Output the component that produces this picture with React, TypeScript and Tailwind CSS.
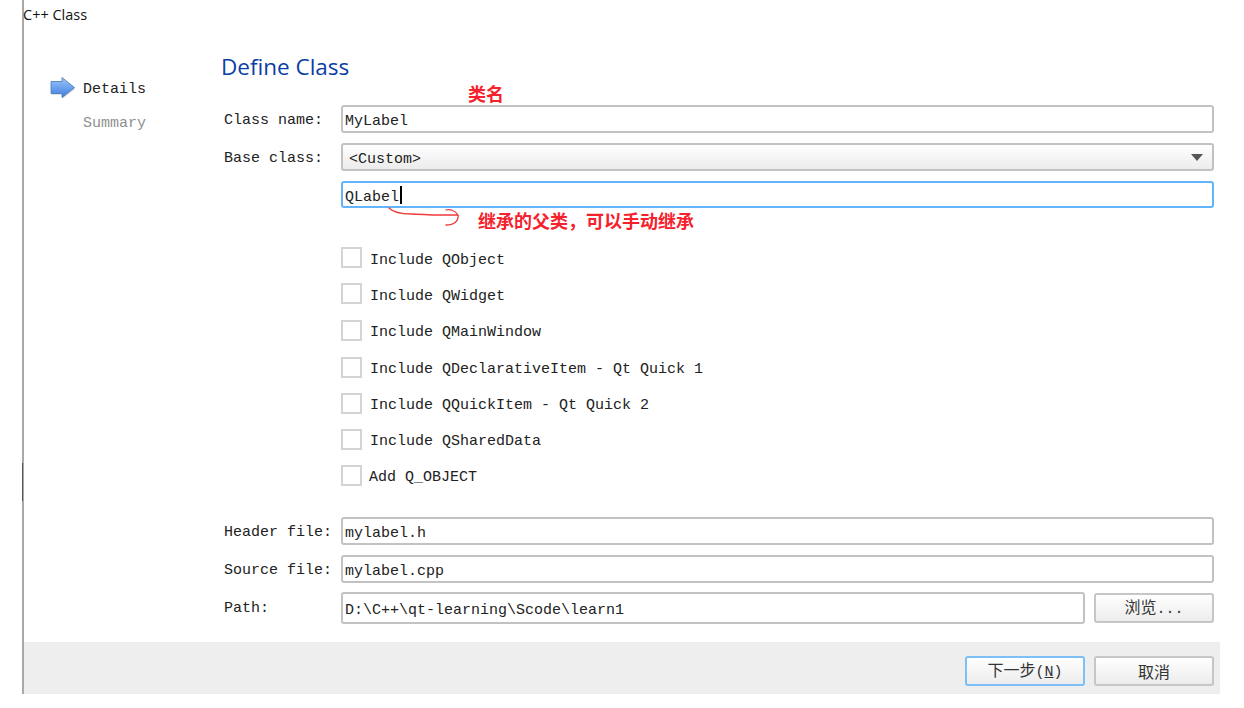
const MONO = "font-['Liberation_Mono','Noto_Sans_CJK_SC',monospace] text-[15px] text-[#222]";
const CJK = "font-['Noto_Sans_CJK_SC',sans-serif]";
const MONO_FACE = "font-['Liberation_Mono',monospace] text-[15px]";

const CHECKS = [
  { label: "Include QObject", mt: "mt-[39px]" },
  { label: "Include QWidget", mt: "mt-[15px]" },
  { label: "Include QMainWindow", mt: "mt-[16px]" },
  { label: "Include QDeclarativeItem - Qt Quick 1", mt: "mt-[16px]" },
  { label: "Include QQuickItem - Qt Quick 2", mt: "mt-[15px]" },
  { label: "Include QSharedData", mt: "mt-[15px]" },
  { label: "Add Q_OBJECT", mt: "mt-[15px]" },
];

function Label({ text, className = "pt-[4px]" }: { text: string; className?: string }) {
  return <div className={"w-[119px] shrink-0 pl-[2px] leading-[20px] " + className}>{text}</div>;
}

function Field({ text, className = "h-[28px]" }: { text: string; className?: string }) {
  return (
    <div className={"flex min-w-0 flex-1 items-center rounded-[3px] border-2 border-[#c2c2c2] bg-white pl-[2px] pt-[6px] leading-[16px] " + className}>
      {text}
    </div>
  );
}

function Button({ text, focus, className = "" }: { text: React.ReactNode; focus?: boolean; className?: string }) {
  return (
    <div
      className={[
        "flex h-[30px] w-[120px] shrink-0 items-center justify-center rounded-[3px] border-2 bg-gradient-to-b from-white to-[#ececec] text-[16px] text-[#333]",
        focus ? "border-[#7cc0f7]" : "border-[#c6c6c6]",
        CJK,
        className,
      ].join(" ")}
    >
      <span>{text}</span>
    </div>
  );
}

function NextArrow() {
  return (
    <svg width="26" height="22" viewBox="0 0 26 22" className="shrink-0">
      <defs>
        <linearGradient id="arrowFill" x1="0" y1="0" x2="0" y2="1">
          <stop offset="0" stopColor="#9cc6f8" />
          <stop offset="1" stopColor="#3d7de0" />
        </linearGradient>
      </defs>
      <path d="M1 5.5h11V1.5L24.5 11 12 21v-4H1z" fill="#8a97a8" opacity="0.45" transform="translate(0.6 0.8)" />
      <path d="M1 4.5h11V.5L24.5 10.5 12 20.5v-4H1z" fill="url(#arrowFill)" stroke="#4a78b5" strokeWidth="0.8" />
    </svg>
  );
}

export default function App() {
  return (
    <div className={"relative h-[708px] w-[1244px] overflow-hidden bg-white " + MONO}>
      <div className="ml-[22px] flex h-[694px] w-[1198px] flex-col border-l-2 border-[#a9a9a9]">
        <div className="-ml-px h-[30px] pt-[6px] font-['Open_Sans',sans-serif] text-[14.5px] leading-[18px] text-[#111]">C++ Class</div>

        <div className="flex min-h-0 flex-1">
          <div className="w-[198px] shrink-0 pl-[26px] pt-[47px]">
            <div className="flex h-[22px] items-center gap-[7px]">
              <NextArrow />
              <span className="pt-[4px] leading-[18px]">Details</span>
            </div>
            <div className="mt-[15px] pl-[33px] leading-[20px] text-[#8f8f8f]">Summary</div>
          </div>

          <div className="w-[992px] shrink-0">
            <h1 className="-ml-px mt-[22px] h-[30px] font-['Open_Sans',sans-serif] text-[22.5px] leading-[30px] text-[#0b3ea6]">Define Class</h1>
            <div className="relative mt-[23px] flex items-center">
              <Label text="Class name:" />
              <Field text="MyLabel" />
              <span className={"absolute left-[246px] top-[-23px] text-[18px] font-bold leading-[22px] text-[#f5222d] " + CJK}>类名</span>
            </div>
            <div className="mt-[10px] flex items-center">
              <Label text="Base class:" />
              <div className="relative flex h-[28px] min-w-0 flex-1 items-center rounded-[3px] border-2 border-[#c2c2c2] bg-gradient-to-b from-white to-[#ececec] pl-[6px] pt-[5px] leading-[16px]">
                &lt;Custom&gt;
                <span className="absolute right-[9px] top-[9px] h-0 w-0 border-x-[6px] border-t-[7px] border-x-transparent border-t-[#555]" />
              </div>
            </div>
            <div className="relative mt-[10px] flex h-[27px] items-center pl-[119px]">
              <div className="flex h-[27px] min-w-0 flex-1 items-center rounded-[3px] border-2 border-[#62b4fb] bg-white pl-[2px] pt-[6px] leading-[16px]">
                QLabel
                <span className="-mt-[6px] ml-[1px] h-[18px] w-[2px] bg-black" />
              </div>
              <svg width="76" height="22" viewBox="0 0 76 22" fill="none" className="absolute left-[166px] top-[26px]">
                <path d="M1 1c5 5 14 6 22 6s18 1 26 1h21c-3-5-9-6-12-5M70 8c1 6-4 10-12 10" stroke="#ee3b3b" strokeWidth="1.3" strokeLinecap="round" />
              </svg>
              <span className={"absolute left-[256px] top-[27px] text-[18px] font-bold leading-[24px] text-[#f5222d] " + CJK}>继承的父类，可以手动继承</span>
            </div>

            <div className="pl-[119px]">
              {CHECKS.map((c, i) => (
                <div key={c.label} className={"flex h-[21px] items-center " + c.mt}>
                  <span className="h-[21px] w-[21px] shrink-0 border-2 border-[#d4d4d4] bg-white" />
                  <span className={"leading-[16px] " + (i < 2 ? "pt-[6px] " : "pt-[4px] ") + (c.label.startsWith("Add") ? "ml-[7px]" : "ml-[8px]")}>{c.label}</span>
                </div>
              ))}
            </div>

            <div className="mt-[31px] flex items-center">
              <Label text="Header file:" />
              <Field text="mylabel.h" />
            </div>
            <div className="mt-[10px] flex items-center">
              <Label text="Source file:" />
              <Field text="mylabel.cpp" />
            </div>
            <div className="mt-[9px] flex items-start">
              <Label text="Path:" className="pt-[7px]" />
              <Field text="D:\C++\qt-learning\Scode\learn1" className="h-[32px]" />
              <Button text={<>浏览<span className={MONO_FACE}>...</span></>} className="ml-[9px] mt-[1px]" />
            </div>
          </div>
        </div>

        <div className="flex h-[52px] items-start justify-end gap-[9px] bg-[#eeeeee] pr-[6px] pt-[14px]">
          <Button focus text={<>下一步<span className={MONO_FACE}>(<span className="underline">N</span>)</span></>} />
          <Button text="取消" />
        </div>
      </div>
      <div className="absolute left-[22px] top-[463px] h-[38px] w-[1px] bg-[#555]" />
    </div>
  );
}
